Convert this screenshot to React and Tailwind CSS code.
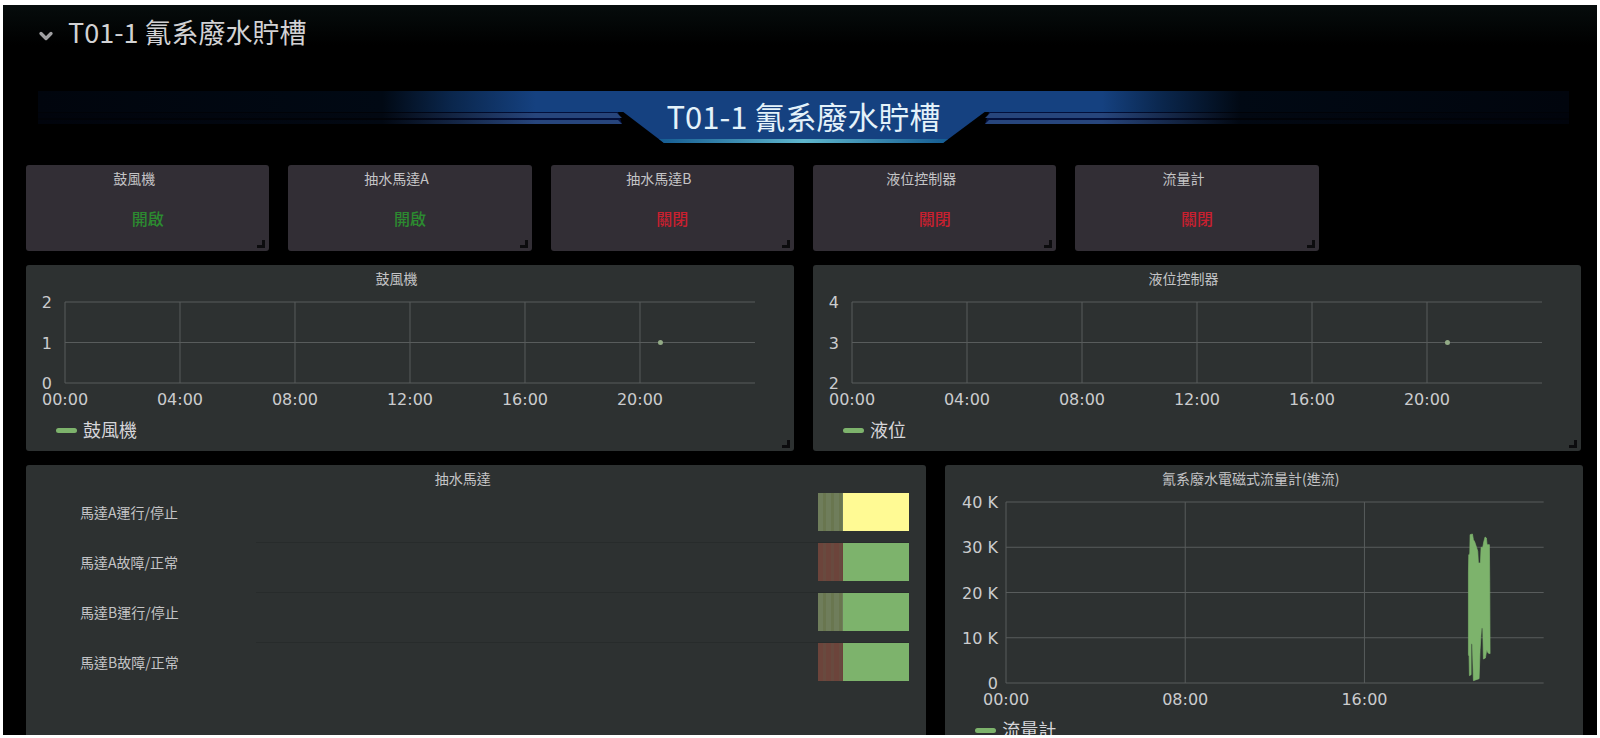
import { useState } from 'react'
import { ChevronDown } from 'lucide-react'

const TANK = 'T01-1 氰系廢水貯槽'

const devices = [
  { name: '鼓風機', on: true },
  { name: '抽水馬達A', on: true },
  { name: '抽水馬達B', on: false },
  { name: '液位控制器', on: false },
  { name: '流量計', on: false },
]

const fourHourly = [
  { at: 0, label: '00:00' },
  { at: 4, label: '04:00' },
  { at: 8, label: '08:00' },
  { at: 12, label: '12:00' },
  { at: 16, label: '16:00' },
  { at: 20, label: '20:00' },
]

const eightHourly = [
  { at: 0, label: '00:00' },
  { at: 8, label: '08:00' },
  { at: 16, label: '16:00' },
]

const OLIVE = 'bg-[repeating-linear-gradient(90deg,#6f7d5b_0px,#6f7d5b_5px,#69764f_5px,#69764f_8px)]'
const BROWN = 'bg-[repeating-linear-gradient(90deg,#6c443b_0px,#6c443b_5px,#684a3f_5px,#684a3f_8px)]'

const motors = [
  { name: '馬達A運行/停止', before: OLIVE, now: 'bg-[#fffa94]' },
  { name: '馬達A故障/正常', before: BROWN, now: 'bg-[#7db36c]' },
  { name: '馬達B運行/停止', before: OLIVE, now: 'bg-[#7db36c]' },
  { name: '馬達B故障/正常', before: BROWN, now: 'bg-[#7db36c]' },
]

// flow readings, drawn in a 1615 x 543 box
const FLOW =
  '1389,213 1390,158 1393,156 1394,98 1401,96 1404,113 1408,120 1414,138 1417,148 1419,183 1425,183 1427,136 1432,136 1435,120 1439,105 1443,108 1445,128 1452,128 1453,238 1454,455 1448,453 1444,443 1440,468 1434,471 1432,378 1428,378 1424,443 1421,530 1404,536 1401,428 1397,423 1397,518 1392,521 1391,463 1389,458'

function Panel({ title, className, children, corner = true }) {
  return (
    <section className={`relative rounded-[3px] ${className}`}>
      <h3 className="h-7 pr-[27px] text-center text-[14px] leading-[26px] text-[#c4c4c6]">{title}</h3>
      {children}
      {corner && (
        <span className="absolute right-1 bottom-[3px] h-2 w-2 border-r-[3px] border-b-[3px] border-[#0c0c0e]" />
      )}
    </section>
  )
}

function Banner({ text }) {
  return (
    <div className="relative mr-7 ml-[35px] h-[53px]">
      <svg className="absolute inset-0 h-full w-full" viewBox="0 0 1531 53" preserveAspectRatio="none" aria-hidden="true">
        <defs>
          <linearGradient id="bar">
            <stop offset="0" stopColor="#01050d" />
            <stop offset="0.225" stopColor="#010914" />
            <stop offset="0.27" stopColor="#0a264c" />
            <stop offset="0.325" stopColor="#154180" />
            <stop offset="0.695" stopColor="#154180" />
            <stop offset="0.735" stopColor="#0a264c" />
            <stop offset="0.785" stopColor="#010914" />
            <stop offset="1" stopColor="#01050d" />
          </linearGradient>
          <linearGradient id="gap" gradientUnits="userSpaceOnUse" x1="0" x2="1531" y1="0" y2="0">
            <stop offset="0.225" stopColor="#010308" />
            <stop offset="0.325" stopColor="#03103c" />
            <stop offset="0.695" stopColor="#03103c" />
            <stop offset="0.785" stopColor="#010308" />
          </linearGradient>
          <linearGradient id="stripe" gradientUnits="userSpaceOnUse" x1="0" x2="1531" y1="0" y2="0">
            <stop offset="0" stopColor="#01040c" />
            <stop offset="0.225" stopColor="#020812" />
            <stop offset="0.325" stopColor="#27457c" />
            <stop offset="0.695" stopColor="#27457c" />
            <stop offset="0.785" stopColor="#020812" />
            <stop offset="1" stopColor="#01040c" />
          </linearGradient>
          <linearGradient id="glow">
            <stop offset="0" stopColor="#155c92" />
            <stop offset="0.5" stopColor="#5fb6cc" />
            <stop offset="1" stopColor="#155c92" />
          </linearGradient>
        </defs>
        <rect x="0" y="1" width="1531" height="21" fill="url(#bar)" />
        <path d="M0 22H580L584 34H0ZM951 22H1531V34H947Z" fill="url(#gap)" />
        <path d="M0 23H579L584 28H0ZM0 30H580L584 34H0Z" fill="url(#stripe)" />
        <path d="M1531 23H952L947 28H1531ZM1531 30H951L947 34H1531Z" fill="url(#stripe)" />
        <path d="M584 21H948L905 53H626Z" fill="#154180" />
        <path d="M621 49H910L905 53H626Z" fill="url(#glow)" />
      </svg>
      <h2 className="relative pt-[3px] text-center text-[31px] leading-[46px] text-[#e4f2fa]">{text}</h2>
    </div>
  )
}

function Chart({ height, yTicks, yGap, xTicks, point, children }) {
  return (
    <svg className={`block w-full overflow-visible ${height}`} fontFamily="'DejaVu Sans', sans-serif" fontSize="16" fill="#cbccce">
      {yTicks.map((label, i) => {
        const y = `${(i / (yTicks.length - 1)) * 100}%`
        return (
          <g key={label}>
            <line x1="0" x2="100%" y1={y} y2={y} stroke="#585c5c" />
            <text x={-yGap} y={y} dy="6" textAnchor="end">{label}</text>
          </g>
        )
      })}
      {xTicks.map(({ at, label }) => {
        const x = `${(at / 24) * 100}%`
        return (
          <g key={label}>
            <line x1={x} x2={x} y1="0" y2="100%" stroke="#585c5c" />
            <text x={x} y="100%" dy="22" textAnchor="middle">{label}</text>
          </g>
        )
      })}
      {point && <circle cx={`${point}%`} cy="50%" r="2.5" fill="#93ab86" />}
      {children}
    </svg>
  )
}

function Legend({ label }) {
  return (
    <div className="mt-[33px] flex items-center gap-[6px] pl-[30px] text-[18px] leading-[27px] text-[#d6d6da]">
      <span className="mt-px h-[5px] w-[21px] rounded-sm bg-[#7db36c]" />
      {label}
    </div>
  )
}

export default function App() {
  const [open, setOpen] = useState(true)

  return (
    <div className="flex h-screen flex-col bg-white px-[3px] pt-[5px] pb-[3px] font-['Noto_Sans_CJK_TC',sans-serif]">
      <main className="min-h-0 flex-1 overflow-hidden bg-black bg-[linear-gradient(#060c0c,#000_40px)]">
        <button
          type="button"
          aria-expanded={open}
          onClick={() => setOpen(!open)}
          className="mb-10 flex items-center gap-[12px] pt-[9px] pl-[33px] text-[27px] leading-9 text-[#d2d2d4]"
        >
          <ChevronDown className="mt-2 h-5 w-5 text-[#a0a0a2]" strokeWidth={4} />
          {TANK}
        </button>

        {open && (
          <>
            <Banner text={TANK} />

            <div className="mt-[22px] mr-4 ml-[23px] grid grid-cols-6 gap-x-[19px] gap-y-[14px]">
              {devices.map(({ name, on }) => (
                <Panel key={name} title={name} className="h-[86px] bg-[#322e35]">
                  <p className={`pt-[11px] text-center text-[16px] leading-7 font-medium ${on ? 'text-[#2c8a30]' : 'text-[#c8202f]'}`}>
                    {on ? '開啟' : '關閉'}
                  </p>
                </Panel>
              ))}

              <Panel title="鼓風機" className="col-span-3 col-start-1 h-[186px] bg-[#2d3131]">
                <div className="px-[39px] pt-[9px]">
                  <Chart height="h-[81px]" yTicks={['2', '1', '0']} yGap={13} xTicks={fourHourly} point={86.3} />
                </div>
                <Legend label="鼓風機" />
              </Panel>

              <Panel title="液位控制器" className="col-span-3 h-[186px] bg-[#2d3131]">
                <div className="px-[39px] pt-[9px]">
                  <Chart height="h-[81px]" yTicks={['4', '3', '2']} yGap={13} xTicks={fourHourly} point={86.3} />
                </div>
                <Legend label="液位" />
              </Panel>
            </div>

            <div className="mt-[14px] mr-[14px] ml-[23px] grid grid-cols-12 gap-x-[19px]">
              <Panel title="抽水馬達" corner={false} className="col-span-7 h-[300px] bg-[#2d3131]">
                <ul className="pr-[17px]">
                  {motors.map(({ name, before, now }) => (
                    <li key={name} className="group flex h-[50px]">
                      <span className="w-[230px] pl-[54px] text-[14px] leading-[38px] text-[#c4c4c6]">{name}</span>
                      <div className="flex flex-1 justify-end border-b border-[#272b2b] pb-[11px] group-last:border-transparent">
                        <div className="flex w-[14%]">
                          <span className={`w-[27%] ${before}`} />
                          <span className={`flex-1 ${now}`} />
                        </div>
                      </div>
                    </li>
                  ))}
                </ul>
              </Panel>

              <Panel title="氰系廢水電磁式流量計(進流)" corner={false} className="col-span-5 h-[300px] bg-[#2d3131]">
                <div className="pt-[9px] pr-[39px] pl-[61px]">
                  <Chart height="h-[181px]" yTicks={['40 K', '30 K', '20 K', '10 K', '0']} yGap={8} xTicks={eightHourly}>
                    <svg width="100%" height="100%" viewBox="0 0 1615 543" preserveAspectRatio="none">
                      <polygon points={FLOW} fill="#7db36c" stroke="#7db36c" strokeWidth="2" strokeLinejoin="round" />
                    </svg>
                  </Chart>
                </div>
                <Legend label="流量計" />
              </Panel>
            </div>
          </>
        )}
      </main>
    </div>
  )
}
